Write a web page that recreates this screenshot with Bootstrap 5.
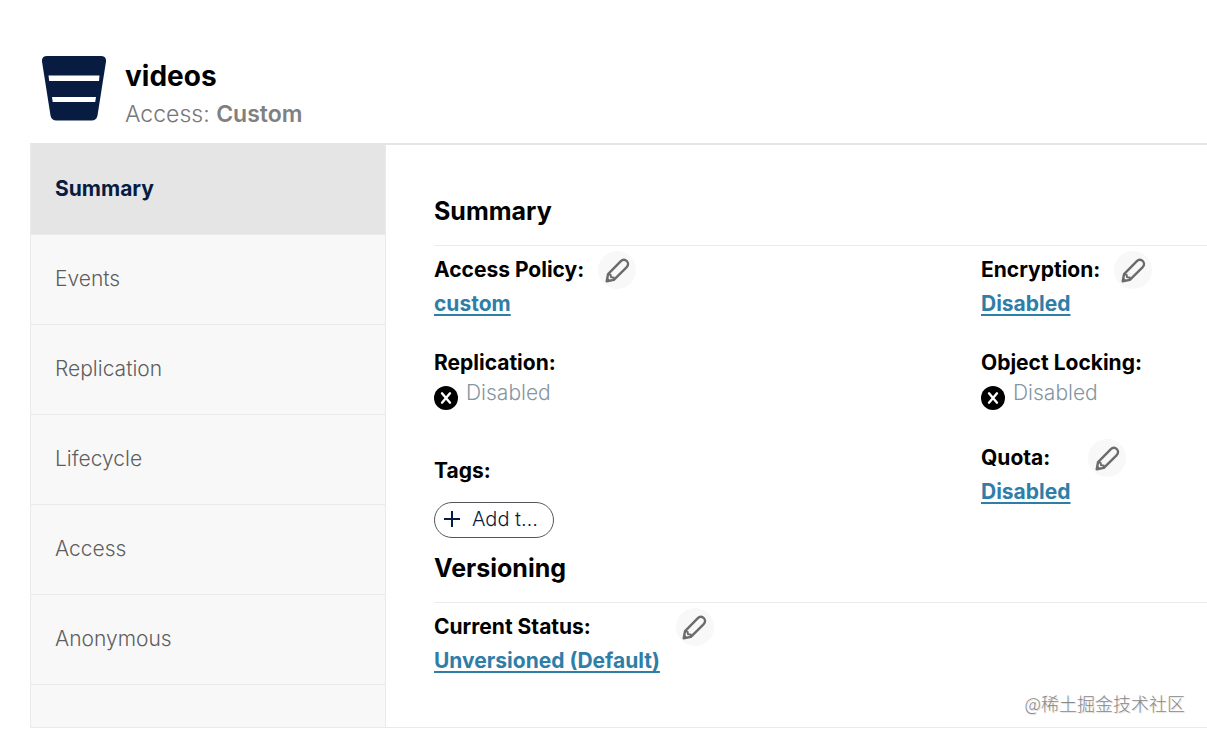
<!DOCTYPE html>
<html lang="en">
<head>
<meta charset="utf-8">
<meta name="viewport" content="width=device-width, initial-scale=1">
<title>videos</title>
<link href="https://cdn.jsdelivr.net/npm/bootstrap@5.3.0/dist/css/bootstrap.min.css" rel="stylesheet">
<style>
  body { font-family: Inter, "Liberation Sans", sans-serif; font-size: 21px; line-height: 30px; color: #000; background: #fff; }
  .bucket-title { font-size: 28px; line-height: 40px; font-weight: 700; }
  .bucket-access { font-size: 23px; line-height: 36px; font-weight: 300; color: #777; }
  .bucket-access strong { font-weight: 600; color: #808080; }
  .bucket-head { padding: 56px 0 11px 42px; gap: 19px; }
  .bucket-body { margin-left: 30px; border-top: 2px solid #e6e6e6; border-bottom: 1px solid #eaeaea; }
  .side-tabs { width: 356px; background: #f8f8f8; border: 1px solid #eaeaea; border-width: 0 1px; padding-bottom: 42px; }
  .side-tabs .nav-link { height: 90px; padding: 0 24px 2px; border-bottom: 1px solid #eaeaea; color: #5e5e5e; font-weight: 300; display: flex; align-items: center; }
  .side-tabs .nav-link.active { background: #e5e5e5; color: #081c42; font-weight: 700; }
  .main-pane { padding: 48px 0 0 48px; }
  .section-title { font-size: 25px; line-height: 36px; font-weight: 700; margin: 0; padding-bottom: 16px; border-bottom: 1px solid #eaeaea; }
  .versioning-title { margin-top: 12px; }
  .facts { display: grid; grid-template-columns: minmax(0, 1fr) 226px; }
  .facts, .version-row { padding-top: 5px; }
  .fact + .fact { margin-top: 29px; }
  .fact + .fact-tags { margin-top: 46px; }
  .fact-head { font-weight: 700; display: flex; align-items: center; gap: 14px; }
  .version-row .fact-head { min-height: 38px; }
  .value-link { font-weight: 700; color: #2f7ea8; text-underline-offset: 3px; text-decoration-thickness: 2px; display: block; width: fit-content; }
  .value-link:hover { color: #1d5f82; }
  .value-off { color: #8496a0; font-weight: 300; gap: 8px; }
  .edit-btn { width: 38px; height: 38px; border-radius: 50%; background: #f8f8f8; padding: 0; border: 0; color: #6b6b6b; display: flex; align-items: center; justify-content: center; }
  .tag-btn { width: 120px; height: 36px; border: 1px solid #55565c; border-radius: 18px; background: #fff; color: #081c42; font-size: 20px; line-height: 28px; font-weight: 300; padding: 0 8px 2px; gap: 11px; white-space: nowrap; }
  .pane-note { color: #888; font-family: "Noto Sans CJK SC", sans-serif; font-weight: 300; font-size: 18px; line-height: 24px; right: 22px; bottom: 12px; text-shadow: 1px 1px 1px #ddd; }
</style>
</head>
<body>
<svg width="0" height="0" class="position-absolute" aria-hidden="true">
  <symbol id="pencil" viewBox="0 0 26 26">
    <path d="M1.800 24.200 3.200 16.700 16.500 3.200C20.500 -.9 26.700 5 22.600 9.400L9.200 22.800Z" fill="none" stroke="currentColor" stroke-width="2.500" stroke-linejoin="round"/>
    <path d="M3.500 17 5.800 17.400 6.300 19.900 9 20.400V22.500" fill="none" stroke="currentColor" stroke-width="2"/>
    <path d="M1 25 2.200 20 6.200 23.900Z" fill="currentColor"/>
  </symbol>
  <symbol id="off" viewBox="0 0 24 24">
    <circle cx="12" cy="12" r="12" fill="#000"/>
    <path d="M8 7.300 16 16.700M16 7.300 8 16.700" stroke="#fff" stroke-width="2.400" stroke-linecap="round"/>
  </symbol>
</svg>
<header class="bucket-head d-flex">
  <svg width="64" height="65" viewBox="0 0 64 65" aria-hidden="true">
    <path d="M5 0H59Q64.500 0 64 5.500L55.500 59.500Q54.500 64.500 49.500 64.500H14.500Q9.500 64.500 8.500 59.500L0 5.500Q-.5 0 5 0Z" fill="#081c42"/>
    <path d="M6.500 19.500H57.500L57 25H7.200ZM10 41H54L53.200 46H10.700Z" fill="#fff"/>
  </svg>
  <div>
    <h1 class="bucket-title m-0">videos</h1>
    <div class="bucket-access">Access: <strong>Custom</strong></div>
  </div>
</header>
<div class="bucket-body d-flex position-relative">
  <nav class="side-tabs nav flex-column flex-nowrap flex-shrink-0" aria-label="Bucket sections">
    <a class="nav-link active" href="#" aria-current="page">Summary</a>
    <a class="nav-link" href="#">Events</a>
    <a class="nav-link" href="#">Replication</a>
    <a class="nav-link" href="#">Lifecycle</a>
    <a class="nav-link" href="#">Access</a>
    <a class="nav-link" href="#">Anonymous</a>
  </nav>
  <main class="main-pane flex-grow-1">
    <h2 class="section-title">Summary</h2>
    <div class="facts">
      <div>
        <div class="fact">
          <div class="fact-head">Access Policy:<button class="edit-btn" type="button" aria-label="Edit access policy"><svg width="25" height="25"><use href="#pencil"/></svg></button></div>
          <a class="value-link" href="#">custom</a>
        </div>
        <div class="fact">
          <div class="fact-head">Replication:</div>
          <div class="value-off d-flex"><svg class="mt-2" width="24" height="24"><use href="#off"/></svg>Disabled</div>
        </div>
        <div class="fact fact-tags">
          <div class="fact-head">Tags:</div>
          <button class="tag-btn d-flex align-items-center mt-3" type="button"><svg width="18" height="18" viewBox="0 0 18 18" aria-hidden="true"><path d="M9 1V17M1 9H17" stroke="currentColor" stroke-width="2"/></svg><span>Add t…</span></button>
        </div>
      </div>
      <div>
        <div class="fact">
          <div class="fact-head">Encryption:<button class="edit-btn" type="button" aria-label="Edit encryption"><svg width="25" height="25"><use href="#pencil"/></svg></button></div>
          <a class="value-link" href="#">Disabled</a>
        </div>
        <div class="fact">
          <div class="fact-head">Object Locking:</div>
          <div class="value-off d-flex"><svg class="mt-2" width="24" height="24"><use href="#off"/></svg>Disabled</div>
        </div>
        <div class="fact">
          <div class="fact-head">Quota:<button class="edit-btn ms-4" type="button" aria-label="Edit quota"><svg width="25" height="25"><use href="#pencil"/></svg></button></div>
          <a class="value-link" href="#">Disabled</a>
        </div>
      </div>
    </div>
    <h2 class="section-title versioning-title">Versioning</h2>
    <div class="version-row d-flex">
      <div>
        <div class="fact-head">Current Status:</div>
        <a class="value-link" href="#">Unversioned (Default)</a>
      </div>
      <button class="edit-btn ms-3" type="button" aria-label="Edit versioning"><svg width="25" height="25"><use href="#pencil"/></svg></button>
    </div>
  </main>
  <div class="pane-note position-absolute">@稀土掘金技术社区</div>
</div>
<script src="https://cdn.jsdelivr.net/npm/bootstrap@5.3.0/dist/js/bootstrap.bundle.min.js"></script>
</body>
</html>
